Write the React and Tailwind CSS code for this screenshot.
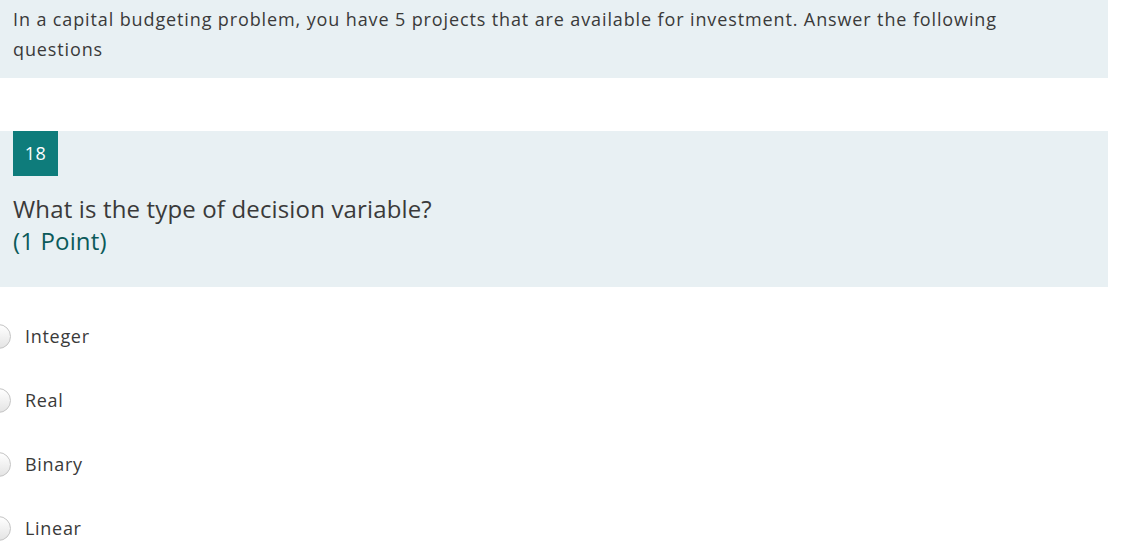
export default function App() {
  const options = ['Integer', 'Real', 'Binary', 'Linear'];
  return (
    <div className="w-[1131px] h-[559px] overflow-hidden bg-white text-[#3a3a3a]" style={{ fontFamily: '"Open Sans", "Noto Sans", sans-serif' }}>
      <div className="w-[1108px] h-[78px] bg-[#e8f0f3] pl-[13px] pr-[100px] pt-[4px]">
        <p className="text-[18px] leading-[30px] tracking-[0.88px]">
          In a capital budgeting problem, you have 5 projects that are available for investment. Answer the following questions
        </p>
      </div>

      <div className="mt-[53px] w-[1108px] h-[156px] bg-[#e8f0f3]">
        <div className="ml-[13px] w-[45px] h-[45px] bg-[#0e7c7b] text-white flex items-center justify-center text-[18px] tracking-[0.5px]">
          18
        </div>
        <div className="px-[13px] pt-[17px]">
          <div className="text-[24px] leading-[32px] tracking-[0.15px]">What is the type of decision variable?</div>
          <div className="text-[24px] leading-[32px] tracking-[0.15px] text-[#0b5a5a]">(1 Point)</div>
        </div>
      </div>

      <div className="pt-[34px] flex flex-col gap-[34px]">
        {options.map((o) => (
          <label key={o} className="flex items-center h-[30px]">
            <span className="-ml-[14px] w-[25px] h-[25px] rounded-full border border-[#c4c4c4] bg-gradient-to-b from-white to-[#e4e4e4] shrink-0" />
            <span className="ml-[14px] text-[18px] leading-[30px] tracking-[0.7px]">{o}</span>
          </label>
        ))}
      </div>
    </div>
  );
}
